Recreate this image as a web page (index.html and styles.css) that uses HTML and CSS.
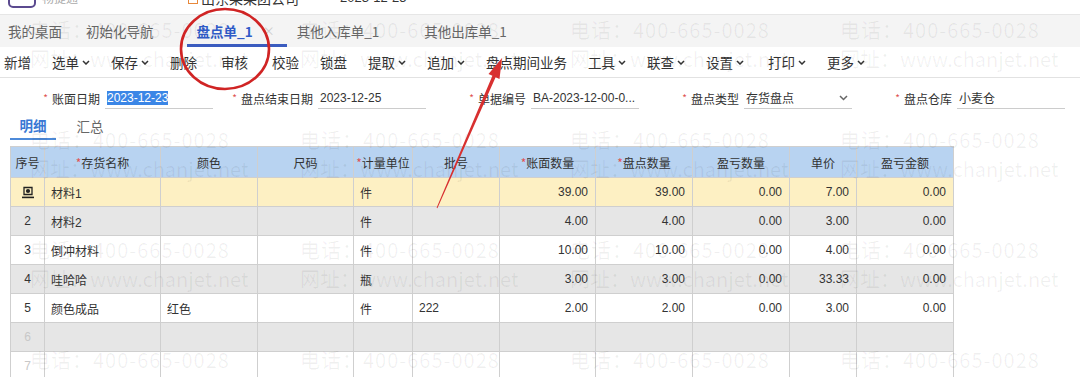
FILE: index.html
```html
<!DOCTYPE html>
<html>
<head>
<meta charset="UTF-8">
<title>盘点单</title>
<link rel="stylesheet" href="styles.css">
</head>
<body>
<div class="page">
	<!-- 顶部信息栏（只露出下半截） -->
	<div class="topbar">
		<div class="topbar-inner">
			<span class="logo"></span>
			<span class="product">畅捷通</span>
			<span class="company">
				<svg class="company-icon" width="10" height="12" viewBox="0 0 10 12"><rect x="0.5" y="0.5" width="9" height="11" fill="none" stroke="#e8883a"/><path d="M2 4h6M2 7h6" stroke="#e8883a"/></svg>
				山东某某团公司
			</span>
			<span class="login-date">2023-12-25</span>
		</div>
	</div>

	<!-- 页签 -->
	<div class="tabbar">
		<span class="tab tab-desk">我的桌面</span>
		<span class="tab tab-guide">初始化导航</span>
		<span class="tab tab-active">盘点单_1<span class="tab-close">×</span></span>
		<span class="tab tab-in">其他入库单_1</span>
		<span class="tab tab-out">其他出库单_1</span>
	</div>

	<!-- 工具栏 -->
	<div class="toolbar">
		<span class="tool">新增</span>
		<span class="tool">选单<svg class="caret" viewBox="0 0 8 5"><path d="M1 1l3 3 3-3"/></svg></span>
		<span class="tool">保存<svg class="caret" viewBox="0 0 8 5"><path d="M1 1l3 3 3-3"/></svg></span>
		<span class="tool">删除</span>
		<span class="tool tool-gap">审核</span>
		<span class="tool tool-gap">校验</span>
		<span class="tool">锁盘</span>
		<span class="tool">提取<svg class="caret" viewBox="0 0 8 5"><path d="M1 1l3 3 3-3"/></svg></span>
		<span class="tool">追加<svg class="caret" viewBox="0 0 8 5"><path d="M1 1l3 3 3-3"/></svg></span>
		<span class="tool">盘点期间业务</span>
		<span class="tool">工具<svg class="caret" viewBox="0 0 8 5"><path d="M1 1l3 3 3-3"/></svg></span>
		<span class="tool">联查<svg class="caret" viewBox="0 0 8 5"><path d="M1 1l3 3 3-3"/></svg></span>
		<span class="tool">设置<svg class="caret" viewBox="0 0 8 5"><path d="M1 1l3 3 3-3"/></svg></span>
		<span class="tool tool-gap">打印<svg class="caret" viewBox="0 0 8 5"><path d="M1 1l3 3 3-3"/></svg></span>
		<span class="tool">更多<svg class="caret" viewBox="0 0 8 5"><path d="M1 1l3 3 3-3"/></svg></span>
	</div>

	<!-- 表头字段 -->
	<div class="form-row">
		<div class="field">
			<span class="field-label"><span class="req">*</span>账面日期</span>
			<span class="field-input"><span class="selected">2023-12-23</span></span>
		</div>
		<div class="field">
			<span class="field-label"><span class="req">*</span>盘点结束日期</span>
			<span class="field-input">2023-12-25</span>
		</div>
		<div class="field">
			<span class="field-label"><span class="req">*</span>单据编号</span>
			<span class="field-input">BA-2023-12-00-0...</span>
		</div>
		<div class="field">
			<span class="field-label"><span class="req">*</span>盘点类型</span>
			<span class="field-input">存货盘点<svg class="select-caret" viewBox="0 0 9 6"><path d="M1 1l3.5 3.5L8 1"/></svg></span>
		</div>
		<div class="field">
			<span class="field-label"><span class="req">*</span>盘点仓库</span>
			<span class="field-input">小麦仓</span>
		</div>
	</div>

	<!-- 明细 / 汇总 -->
	<div class="subtabs">
		<span class="subtab subtab-active">明细</span>
		<span class="subtab">汇总</span>
	</div>

	<!-- 明细表 -->
	<table class="grid">
		<colgroup>
			<col class="c-seq"><col class="c-name"><col class="c-color"><col class="c-size"><col class="c-unit"><col class="c-batch">
			<col class="c-num"><col class="c-num2"><col class="c-num2"><col class="c-price"><col class="c-amount">
		</colgroup>
		<thead>
			<tr>
				<th>序号</th>
				<th><span class="star">*</span>存货名称</th>
				<th>颜色</th>
				<th>尺码</th>
				<th><span class="star">*</span>计量单位</th>
				<th>批号</th>
				<th><span class="star">*</span>账面数量</th>
				<th><span class="star">*</span>盘点数量</th>
				<th>盈亏数量</th>
				<th>单价</th>
				<th>盈亏金额</th>
			</tr>
		</thead>
		<tbody>
			<tr class="row-current">
				<td class="seq"><svg class="row-icon" width="12" height="13" viewBox="0 0 12 13"><path d="M2 1.5h8v7H2z" fill="none" stroke="#222" stroke-width="1.3"/><circle cx="6" cy="5" r="2.1" fill="#222"/><rect x="0" y="10.6" width="12" height="1.6" fill="#222"/></svg></td>
				<td>材料1</td><td></td><td></td><td>件</td><td></td>
				<td class="num">39.00</td><td class="num">39.00</td><td class="num">0.00</td><td class="num">7.00</td><td class="num">0.00</td>
			</tr>
			<tr class="row-alt">
				<td class="seq">2</td>
				<td>材料2</td><td></td><td></td><td>件</td><td></td>
				<td class="num">4.00</td><td class="num">4.00</td><td class="num">0.00</td><td class="num">3.00</td><td class="num">0.00</td>
			</tr>
			<tr>
				<td class="seq">3</td>
				<td>倒冲材料</td><td></td><td></td><td>件</td><td></td>
				<td class="num">10.00</td><td class="num">10.00</td><td class="num">0.00</td><td class="num">4.00</td><td class="num">0.00</td>
			</tr>
			<tr class="row-alt">
				<td class="seq">4</td>
				<td>哇哈哈</td><td></td><td></td><td>瓶</td><td></td>
				<td class="num">3.00</td><td class="num">3.00</td><td class="num">0.00</td><td class="num">33.33</td><td class="num">0.00</td>
			</tr>
			<tr>
				<td class="seq">5</td>
				<td>颜色成品</td><td>红色</td><td></td><td>件</td><td>222</td>
				<td class="num">2.00</td><td class="num">2.00</td><td class="num">0.00</td><td class="num">3.00</td><td class="num">0.00</td>
			</tr>
			<tr class="row-alt">
				<td class="seq seq-empty">6</td>
				<td></td><td></td><td></td><td></td><td></td><td></td><td></td><td></td><td></td><td></td>
			</tr>
			<tr>
				<td class="seq seq-empty">7</td>
				<td></td><td></td><td></td><td></td><td></td><td></td><td></td><td></td><td></td><td></td>
			</tr>
		</tbody>
	</table>

	<!-- 水印 -->
	<div class="watermark">
		<div class="wm"><div>电话：400-665-0028</div><div class="wm-url">网址：www.chanjet.net</div></div>
		<div class="wm"><div>电话：400-665-0028</div><div class="wm-url">网址：www.chanjet.net</div></div>
		<div class="wm"><div>电话：400-665-0028</div><div class="wm-url">网址：www.chanjet.net</div></div>
		<div class="wm"><div>电话：400-665-0028</div><div class="wm-url">网址：www.chanjet.net</div></div>
		<div class="wm"><div>电话：400-665-0028</div><div class="wm-url">网址：www.chanjet.net</div></div>
		<div class="wm"><div>电话：400-665-0028</div><div class="wm-url">网址：www.chanjet.net</div></div>
		<div class="wm"><div>电话：400-665-0028</div><div class="wm-url">网址：www.chanjet.net</div></div>
		<div class="wm"><div>电话：400-665-0028</div><div class="wm-url">网址：www.chanjet.net</div></div>
		<div class="wm"><div>电话：400-665-0028</div><div class="wm-url">网址：www.chanjet.net</div></div>
		<div class="wm"><div>电话：400-665-0028</div><div class="wm-url">网址：www.chanjet.net</div></div>
		<div class="wm"><div>电话：400-665-0028</div><div class="wm-url">网址：www.chanjet.net</div></div>
		<div class="wm"><div>电话：400-665-0028</div><div class="wm-url">网址：www.chanjet.net</div></div>
		<div class="wm"><div>电话：400-665-0028</div><div class="wm-url">网址：www.chanjet.net</div></div>
		<div class="wm"><div>电话：400-665-0028</div><div class="wm-url">网址：www.chanjet.net</div></div>
		<div class="wm"><div>电话：400-665-0028</div><div class="wm-url">网址：www.chanjet.net</div></div>
		<div class="wm"><div>电话：400-665-0028</div><div class="wm-url">网址：www.chanjet.net</div></div>
	</div>

	<!-- 红色标注 -->
	<svg class="annotation" width="1080" height="377" viewBox="0 0 1080 377">
		<ellipse cx="225" cy="49" rx="44" ry="40" fill="none" stroke="#d02424" stroke-width="2.6"/>
		<polygon points="502,58 499.5,79 495.6,77.2 437.4,208.2 436.6,207.8 492.4,75.8 488.5,74" fill="#d83030"/>
	</svg>
</div>
</body>
</html>
```

FILE: styles.css
```css
body{
	margin: 0;
	font-family: "Noto Sans CJK SC", "Liberation Sans", sans-serif;
	color: #333;
	background: #fff;
}
.page{
	position: relative;
	width: 1080px;
	height: 377px;
	overflow: hidden;
}

/* 顶部信息栏 */
.topbar{
	height: 14px;
	overflow: hidden;
}
.topbar-inner{
	display: flex;
	align-items: center;
	height: 24px;
	margin-top: -14px;
	font-size: 14px;
	line-height: 24px;
}
.logo{
	width: 28px;
	height: 20px;
	margin-left: 8px;
	border: 2px solid #5b4a8f;
	border-radius: 5px;
	box-sizing: border-box;
}
.product{
	margin-left: 6px;
	font-size: 12px;
	color: #aaa;
}
.company{
	display: flex;
	align-items: center;
	margin-left: 110px;
	color: #333;
}
.company-icon{
	margin-right: 3px;
}
.login-date{
	margin-left: 41px;
	font-family: "Liberation Sans", sans-serif;
	font-size: 13px;
}

/* 页签 */
.tabbar{
	display: flex;
	height: 33px;
	border-top: 1px solid #e6e6e6;
	background: #f4f4f4;
	box-sizing: border-box;
	font-size: 13.5px;
}
.tab{
	display: flex;
	align-items: center;
	color: #666;
	box-sizing: border-box;
	white-space: nowrap;
}
.tab-desk{
	padding: 0 12px 0 8px;
}
.tab-guide{
	padding: 0 33px 0 12px;
}
.tab-active{
	padding: 0 12px 0 10px;
	color: #2f5bc8;
	font-weight: bold;
	border-bottom: 3px solid #3b5cbf;
	padding-top: 2px;
}
.tab-close{
	margin-left: 10px;
	font-weight: normal;
	font-size: 12px;
	color: #ccc;
}
.tab-in{
	padding: 0 45px 0 10px;
}

/* 工具栏 */
.toolbar{
	display: flex;
	align-items: center;
	gap: 21px;
	height: 30px;
	padding-left: 4px;
	border-bottom: 1px solid #e2e2e2;
	font-size: 13.5px;
	color: #333;
}
.tool{
	display: flex;
	align-items: center;
	white-space: nowrap;
}
.tool-gap{
	margin-left: 3px;
}
.caret{
	width: 8px;
	height: 5px;
	margin-left: 3px;
	fill: none;
	stroke: #333;
	stroke-width: 1.5;
}

/* 表头字段 */
.form-row{
	display: grid;
	grid-template-columns: repeat(5, 213px);
	height: 22px;
	margin-top: 9px;
	font-size: 12px;
}
.field{
	display: flex;
	align-items: center;
}
.field-label{
	width: 105px;
	padding-right: 5px;
	text-align: right;
	box-sizing: border-box;
	white-space: nowrap;
	color: #333;
}
.req{
	margin-right: 4px;
	font-size: 10px;
	color: #e05252;
	vertical-align: 2px;
}
.field-input{
	display: flex;
	align-items: center;
	width: 108px;
	height: 22px;
	padding-left: 2px;
	border-bottom: 1px solid #ccc;
	box-sizing: border-box;
	font-family: "Liberation Sans", "Noto Sans CJK SC", sans-serif;
	font-size: 12px;
	white-space: nowrap;
	overflow: hidden;
}
.selected{
	background: #3b86e6;
	color: #fff;
}
.select-caret{
	width: 9px;
	height: 6px;
	margin-left: auto;
	margin-right: 4px;
	fill: none;
	stroke: #666;
	stroke-width: 1.5;
}

/* 明细 / 汇总 */
.subtabs{
	display: flex;
	height: 28px;
	margin: 3px 0 0 10px;
	font-size: 13.5px;
}
.subtab{
	display: flex;
	align-items: center;
	padding: 0 9.5px;
	color: #666;
	box-sizing: border-box;
}
.subtab-active{
	color: #3a78d4;
	font-weight: bold;
	border-bottom: 2px solid #4d8ad9;
	margin-right: 11px;
}

/* 明细表 */
.grid{
	margin: 6px 0 0 10px;
	width: 943px;
	border-collapse: collapse;
	table-layout: fixed;
	font-family: "Liberation Sans", "Noto Sans CJK SC", sans-serif;
	font-size: 12px;
}
.c-seq{ width: 34px; }
.c-name{ width: 116px; }
.c-color{ width: 97px; }
.c-size{ width: 96px; }
.c-unit{ width: 59px; }
.c-batch{ width: 87px; }
.c-num{ width: 96px; }
.c-num2{ width: 97px; }
.c-price{ width: 67px; }
.c-amount{ width: 97px; }
.grid th,
.grid td{
	border: 1px solid #cfcfcf;
	padding: 0 6px;
	white-space: nowrap;
	overflow: hidden;
}
.grid thead tr{
	height: 31px;
	background: #b8d3f1;
}
.grid th{
	font-family: "Noto Sans CJK SC", sans-serif;
	font-weight: normal;
	text-align: center;
	color: #333;
	padding: 0;
}
.star{
	color: #e05252;
}
.grid tbody tr{
	height: 29px;
}
.row-current{
	background: #fdf0c3;
}
.row-alt{
	background: #e6e6e6;
}
.grid td.num{
	text-align: right;
	padding-right: 7px;
}
.grid td.seq{
	text-align: center;
	padding: 0;
}
.grid td.seq-empty{
	color: #c8c8c8;
}
.row-icon{
	display: block;
	margin: 0 auto;
}

/* 水印 */
.watermark{
	position: absolute;
	top: 0;
	left: 0;
	width: 1080px;
	height: 377px;
	padding: 20px 0 0 30px;
	box-sizing: border-box;
	display: grid;
	grid-template-columns: repeat(4, 270px);
	grid-auto-rows: 110px;
	pointer-events: none;
	font-family: "Noto Sans CJK SC", sans-serif;
	font-size: 20px;
	line-height: 20px;
	letter-spacing: 1px;
	color: rgba(0, 0, 0, 0.06);
	white-space: nowrap;
}
.wm-url{
	margin-top: 9px;
	letter-spacing: 0;
}

/* 红色标注 */
.annotation{
	position: absolute;
	top: 0;
	left: 0;
	pointer-events: none;
}
```
